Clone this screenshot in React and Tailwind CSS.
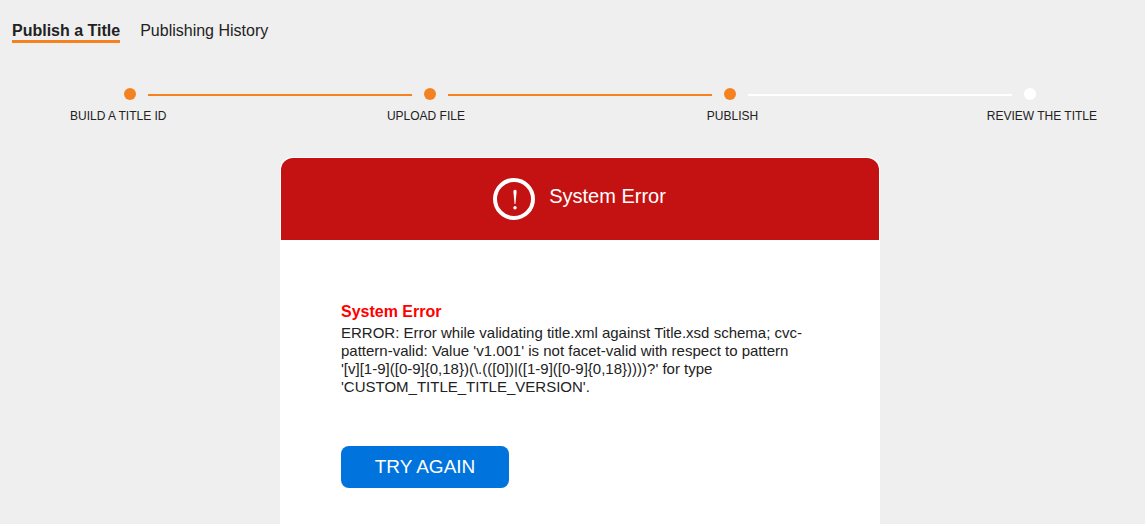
import React from "react";

const steps = [
  { label: "BUILD A TITLE ID", done: true, lineDone: true },
  { label: "UPLOAD FILE", done: true, lineDone: true },
  { label: "PUBLISH", done: true, lineDone: false },
  { label: "REVIEW THE TITLE", done: false },
];

function Tabs() {
  return (
    <nav className="flex gap-5 px-3 pt-[22px] text-base leading-[18px]">
      <a href="#publish" aria-current="page" className="border-b-3 border-[#f58220] font-bold">
        Publish a Title
      </a>
      <a href="#history">Publishing History</a>
    </nav>
  );
}

function Stepper() {
  return (
    <section aria-label="Progress" className="pt-[45px]">
      <div className="flex items-center gap-3 pr-[109px] pl-[124px]">
        {steps.map((step) => (
          <React.Fragment key={step.label}>
            <span className={`size-3 shrink-0 rounded-full ${step.done ? "bg-[#f58220]" : "bg-white"}`} />
            {step.lineDone !== undefined && (
              <span className={`mt-0.5 h-0.5 flex-1 ${step.lineDone ? "bg-[#f58220]" : "bg-white"}`} />
            )}
          </React.Fragment>
        ))}
      </div>
      <ol className="grid grid-cols-[317fr_320fr_280fr_110fr] pt-2 pr-12 pl-[70px] text-xs leading-4">
        {steps.map((step) => (
          <li key={step.label} className="whitespace-nowrap">
            {step.label}
          </li>
        ))}
      </ol>
    </section>
  );
}

function AlertIcon() {
  return (
    <svg viewBox="0 0 42 42" className="size-[42px] shrink-0" aria-hidden="true">
      <circle cx="21" cy="21" r="19" fill="none" stroke="#fff" strokeWidth="4" />
      <path d="M22 11.800c1.200 0 1.700.8 1.600 2.200l-1.200 12h-.8l-1.200-12C20.300 12.600 20.800 11.800 22 11.800z" fill="#fff" />
      <circle cx="22" cy="29.800" r="1.700" fill="#fff" />
    </svg>
  );
}

export default function App() {
  return (
    <div className="flex min-h-screen flex-col bg-[#efefef] font-['Liberation_Sans',Arial,sans-serif] text-[#222]">
      <Tabs />
      <Stepper />
      <main className="flex flex-1 justify-center pt-[33px] pl-[15px]">
        <section className="w-full max-w-[600px] rounded-t-xl bg-white">
          <header className="mx-px mt-px flex justify-center gap-3.5 rounded-t-xl bg-[#c41212] py-5 pr-px text-white">
            <AlertIcon />
            <h1 className="pt-1 text-xl leading-7">System Error</h1>
          </header>
          <div className="px-[61px] pt-[62px] pb-9">
            <h2 className="text-base leading-5 font-bold text-[#f00]">System Error</h2>
            <p className="pt-0.5 pr-3 text-[15px] leading-[18px]">
              ERROR: Error while validating title.xml against Title.xsd schema; cvc-pattern-valid: Value 'v1.001' is
              not facet-valid with respect to pattern{" "}
              {"'[v][1-9]([0-9]{0,18})(\\.(([0])|([1-9]([0-9]{0,18}))))?' for type 'CUSTOM_TITLE_TITLE_VERSION'."}
            </p>
            <button type="button" className="mt-[50px] h-[42px] w-[168px] rounded-lg bg-[#0073dc] text-[19px] leading-6 text-white">
              TRY AGAIN
            </button>
          </div>
        </section>
      </main>
    </div>
  );
}
